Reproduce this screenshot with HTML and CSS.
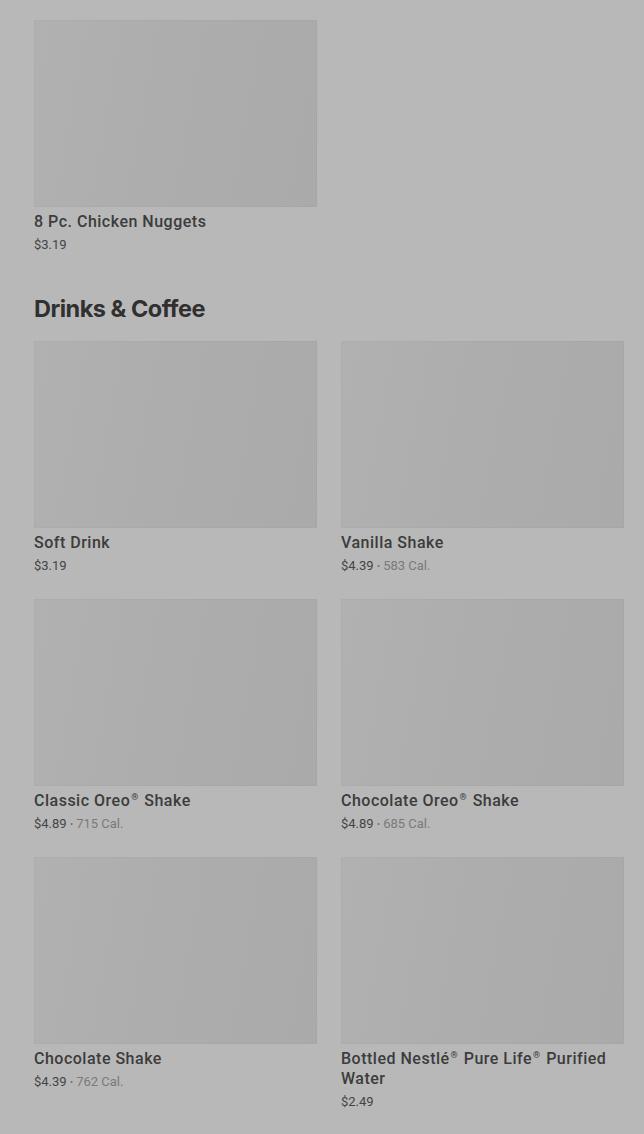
FILE: index.html
```html
<!DOCTYPE html>
<html lang="en">
<head>
  <meta charset="UTF-8" />
  <meta name="viewport" content="width=device-width, initial-scale=1.0"/>
  <title>Menu</title>
  <link rel="stylesheet" href="styles.css">
</head>
<body>

  <div class="menu">
    <div class="item-grid">
      <div class="item-card">
        <div class="item-image"></div>
        <div class="item-name">8 Pc. Chicken Nuggets</div>
        <div class="item-info">$3.19</div>
      </div>
    </div>

    <h2 class="section-title">Drinks &amp; Coffee</h2>

    <div class="item-grid">
      <div class="item-card">
        <div class="item-image"></div>
        <div class="item-name">Soft Drink</div>
        <div class="item-info">$3.19</div>
      </div>
      <div class="item-card">
        <div class="item-image"></div>
        <div class="item-name">Vanilla Shake</div>
        <div class="item-info">$4.39 <span class="dot">•</span> <span class="cal">583 Cal.</span></div>
      </div>
      <div class="item-card">
        <div class="item-image"></div>
        <div class="item-name">Classic Oreo<span class="reg">®</span> Shake</div>
        <div class="item-info">$4.89 <span class="dot">•</span> <span class="cal">715 Cal.</span></div>
      </div>
      <div class="item-card">
        <div class="item-image"></div>
        <div class="item-name">Chocolate Oreo<span class="reg">®</span> Shake</div>
        <div class="item-info">$4.89 <span class="dot">•</span> <span class="cal">685 Cal.</span></div>
      </div>
      <div class="item-card">
        <div class="item-image"></div>
        <div class="item-name">Chocolate Shake</div>
        <div class="item-info">$4.39 <span class="dot">•</span> <span class="cal">762 Cal.</span></div>
      </div>
      <div class="item-card">
        <div class="item-image"></div>
        <div class="item-name">Bottled Nestlé<span class="reg">®</span> Pure Life<span class="reg">®</span> Purified Water</div>
        <div class="item-info">$2.49</div>
      </div>
      <div class="item-card">
        <div class="item-image"></div>
      </div>
      <div class="item-card">
        <div class="item-image"></div>
      </div>
    </div>
  </div>

</body>
</html>
```

FILE: styles.css
```css
html, body {
  height: 100%;
  overflow: hidden;
}

body {
  font-family: Roboto, "Liberation Sans", Arial, sans-serif;
  background-color: #b8b8b8;
  margin: 0;
  color: #363636;
}

.menu {
  padding: 20px 20px 0 34px;
}

.item-grid {
  display: grid;
  grid-template-columns: 283px 283px;
  column-gap: 24px;
  row-gap: 24px;
}

.item-image {
  height: 187px;
  background: linear-gradient(100deg, #b1b1b1 0%, #adadad 45%, #aaaaaa 100%);
  box-shadow: inset 0 0 0 1px rgba(0, 0, 0, 0.02);
}

.item-name {
  margin-top: 5px;
  font-size: 16px;
  line-height: 20px;
  font-weight: 500;
  letter-spacing: 0.5px;
  color: #3c3c3c;
}

.item-name .reg {
  font-size: 9px;
  line-height: 1;
  vertical-align: 6px;
  margin: 0 1px;
}

.item-info {
  margin-top: 4px;
  font-size: 13px;
  line-height: 18px;
  color: #444444;
}

.item-info .dot {
  font-size: 9px;
  color: #6e6e6e;
  vertical-align: 1px;
}

.item-info .cal {
  color: #7a7a7a;
}

.section-title {
  font-family: Inter, "Liberation Sans", sans-serif;
  font-size: 23.5px;
  line-height: 28px;
  font-weight: 700;
  letter-spacing: -0.5px;
  color: #303030;
  margin: 41px 0 18px;
}
```
